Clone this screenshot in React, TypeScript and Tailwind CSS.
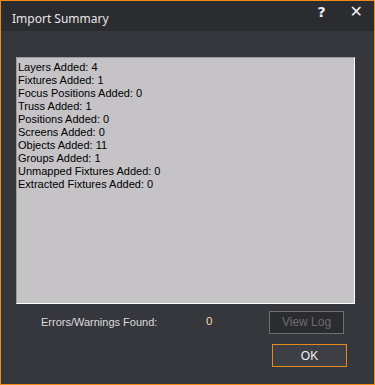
import React from 'react';

const lines = [
  'Layers Added: 4',
  'Fixtures Added: 1',
  'Focus Positions Added: 0',
  'Truss Added: 1',
  'Positions Added: 0',
  'Screens Added: 0',
  'Objects Added: 11',
  'Groups Added: 1',
  'Unmapped Fixtures Added: 0',
  'Extracted Fixtures Added: 0',
];

export default function App() {
  return (
    <div className="w-[375px] h-[385px] border border-[#f28a16] bg-[#36373c] flex flex-col font-['Liberation_Sans',sans-serif]">
      <div className="h-[30px] bg-[#2b2c30] flex items-center pl-[11px] pr-[11px] shrink-0">
        <span className="text-[12px] text-[#e6e6e6] font-['Noto_Sans',sans-serif] mt-[6px]">Import Summary</span>
        <span className="ml-auto text-[#f0f0f0] text-[14px] font-bold font-['DejaVu_Sans',sans-serif] mt-[-8px]">?</span>
        <span className="ml-[24px] text-[#f0f0f0] text-[16px] font-bold font-['DejaVu_Sans',sans-serif] mt-[-9px]">✕</span>
      </div>
      <div className="flex-1 flex flex-col px-[15px] pt-[26px]">
        <div className="w-[339px] h-[247px] bg-[#c5c3c6] border border-t-[#9a9a9a] border-l-[#9a9a9a] border-r-white border-b-white pl-[1px] pt-[3px]">
          {lines.map((l) => (
            <div key={l} className="text-[11px] leading-[13px] text-black">{l}</div>
          ))}
        </div>
        <div className="flex items-center mt-[7px] h-[22px]">
          <span className="ml-[25px] w-[165px] text-[11px] text-[#dcdcdc]">Errors/Warnings Found:</span>
          <span className="text-[11.5px] text-[#f5d7a8]">0</span>
          <button className="ml-auto mr-[15px] w-[75px] h-[23px] border border-[#707070] bg-[#2b2c30] text-[12px] text-[#6c6c6c]">View Log</button>
        </div>
        <div className="flex mt-[11px]">
          <button className="ml-auto mr-[12px] w-[75px] h-[23px] border border-[#e68a1c] bg-[#3e3f44] text-[12px] text-[#f0f0f0]">OK</button>
        </div>
      </div>
    </div>
  );
}
